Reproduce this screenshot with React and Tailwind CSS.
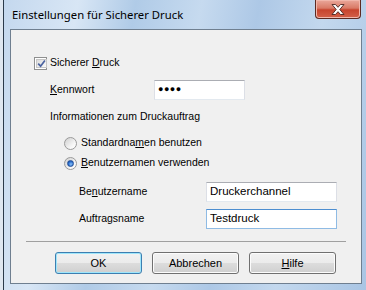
import React from "react";

function Check() {
  return (
    <span className="w-[13px] h-[13px] border border-[#8e8f8f] bg-white p-[1px] flex">
      <span className="flex-1 border border-[#c6c6c6] bg-[linear-gradient(135deg,#dcdcdc,#fafafa)] flex items-center justify-center">
        <svg width="9" height="9" viewBox="0 0 9 9">
          <path d="M1.2 4.6 L3.6 7.2 L7.9 1.4" stroke="#4b63a0" strokeWidth="1.7" fill="none" />
        </svg>
      </span>
    </span>
  );
}

function Radio({ checked }) {
  return (
    <span className="w-[13px] h-[13px] rounded-full border border-[#9a9a9a] bg-[linear-gradient(135deg,#cfcfcf,#f8f8f8_70%,#ffffff)] flex items-center justify-center">
      {checked && (
        <span className="w-[7px] h-[7px] rounded-full bg-[radial-gradient(circle_at_60%_65%,#8ec2f5,#2a6fd0_55%,#0f3b8c)] border border-[#244f96]" />
      )}
    </span>
  );
}

function Field({ w, children, focused }) {
  return (
    <div
      className={
        focused
          ? `${w} h-[20px] bg-white border border-[#8fbbe4] border-t-[#4d8ed0] flex items-center pl-[3px] text-[11.5px] text-black`
          : `${w} h-[20px] bg-white border border-[#e3e9ef] border-t-[#abadb3] border-l-[#dcdfe6] border-r-[#dcdfe6] flex items-center pl-[3px] text-[11.5px] text-black`
      }
    >
      {children}
    </div>
  );
}

function Btn({ children, def }) {
  return (
    <div
      className={
        def
          ? "w-[87px] h-[22px] rounded-[3px] border border-[#3c7fb1] shadow-[inset_0_0_0_1px_#9fe6fb] bg-[linear-gradient(#f2f2f2_0%,#ebebeb_50%,#dddddd_50%,#cfcfcf_100%)] flex items-center justify-center text-[11px] text-black"
          : "w-[87px] h-[22px] rounded-[3px] border border-[#707070] shadow-[inset_0_0_0_1px_#fcfcfc] bg-[linear-gradient(#f2f2f2_0%,#ebebeb_50%,#dddddd_50%,#cfcfcf_100%)] flex items-center justify-center text-[11px] text-black"
      }
    >
      {children}
    </div>
  );
}

export default function App() {
  return (
    <div className="w-[366px] h-[290px] flex overflow-hidden bg-[#dbe4ee] font-['Liberation_Sans',Arial,sans-serif]">
      <div className="w-[3px] bg-[#dfe7f0]" />
      <div className="flex-1 flex flex-col border-l border-[#2b3a4a] bg-[linear-gradient(100deg,#c4d8ee_0%,#d8e6f5_18%,#b0cbe7_32%,#c6daef_48%,#adc8e6_62%,#c3d8ee_78%,#a9c5e4_100%)]">
        {/* title bar */}
        <div className="h-[29px] flex">
          <div className="self-center pl-[8px] text-[11.3px] text-black font-['Noto_Sans',sans-serif] leading-none">
            Einstellungen für Sicherer Druck
          </div>
          <div className="ml-auto mr-[5px] w-[46px] h-[19px] rounded-b-[4px] border border-t-0 border-[#5c2a22] bg-[linear-gradient(#eaa89b_0%,#d97a66_45%,#c7442e_55%,#d3614a_100%)] shadow-[inset_0_0_0_1px_#f1b7ab] flex items-center justify-center">
            <svg width="14" height="11" viewBox="0 0 14 11">
              <path
                d="M1 0.5 H4.5 L7 3.3 L9.5 0.5 H13 L8.8 5.5 L13 10.5 H9.5 L7 7.7 L4.5 10.5 H1 L5.2 5.5 Z"
                fill="#ffffff"
                stroke="#4a2520"
                strokeWidth="0.9"
              />
            </svg>
          </div>
        </div>
        {/* body */}
        <div className="flex flex-1">
          <div className="w-[6px]" />
          <div className="flex-1 flex flex-col border border-[#6f7f90] bg-[#f0f0f0] text-[10.5px] text-black">
            <div className="mt-[25px] h-[16px] flex items-center pl-[23px] gap-[3px]">
              <Check />
              <span>
                Sicherer <span className="underline">D</span>ruck
              </span>
            </div>
            <div className="mt-[9px] h-[20px] flex items-center pl-[39px]">
              <span className="w-[104px]">
                <span className="underline">K</span>ennwort
              </span>
              <Field w="w-[91px]">
                <span className="text-[9px] tracking-[0.5px] font-bold">●●●●</span>
              </Field>
            </div>
            <div className="mt-[9px] h-[16px] flex items-center pl-[39px]">Informationen zum Druckauftrag</div>
            <div className="mt-[10px] h-[16px] flex items-center pl-[53px] gap-[4px]">
              <Radio />
              <span>
                Standardna<span className="underline">m</span>en benutzen
              </span>
            </div>
            <div className="mt-[4px] h-[16px] flex items-center pl-[53px] gap-[4px]">
              <Radio checked />
              <span>
                <span className="underline">B</span>enutzernamen verwenden
              </span>
            </div>
            <div className="mt-[11px] h-[20px] flex items-center pl-[68px]">
              <span className="w-[127px]">
                Be<span className="underline">n</span>utzername
              </span>
              <Field w="w-[131px]">Druckerchannel</Field>
            </div>
            <div className="mt-[7px] h-[20px] flex items-center pl-[68px]">
              <span className="w-[127px]">
                Auftra<span className="underline">g</span>sname
              </span>
              <Field w="w-[131px]" focused>
                Testdruck
              </Field>
            </div>
            <div className="mt-[12px] ml-[15px] w-[320px] h-px bg-[#a0a0a0]" />
            <div className="mt-[10px] flex pl-[44px] gap-[10px]">
              <Btn def>OK</Btn>
              <Btn>Abbrechen</Btn>
              <Btn>
                <span className="underline">H</span>ilfe
              </Btn>
            </div>
          </div>
          <div className="w-[4px]" />
        </div>
        <div className="h-[6px]" />
      </div>
    </div>
  );
}
